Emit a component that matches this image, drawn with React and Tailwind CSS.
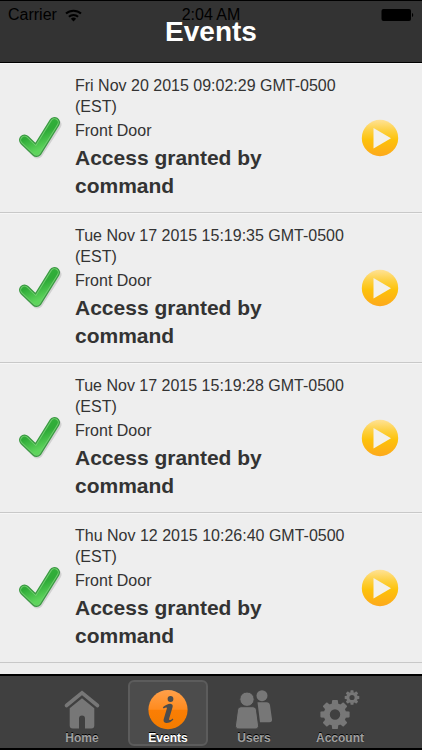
import { useState } from "react";

const events = [
  { id: 1, date: "Fri Nov 20 2015 09:02:29 GMT-0500 (EST)", door: "Front Door", message: "Access granted by command" },
  { id: 2, date: "Tue Nov 17 2015 15:19:35 GMT-0500 (EST)", door: "Front Door", message: "Access granted by command" },
  { id: 3, date: "Tue Nov 17 2015 15:19:28 GMT-0500 (EST)", door: "Front Door", message: "Access granted by command" },
  { id: 4, date: "Thu Nov 12 2015 10:26:40 GMT-0500 (EST)", door: "Front Door", message: "Access granted by command" },
];

const WifiIcon = () => (
  <svg width="17" height="13" viewBox="0 0 17 13" fill="none" stroke="#000" strokeWidth="2" aria-hidden="true">
    <path d="M1 4.6a11 11 0 0 1 15 0" />
    <path d="M3.9 7.8a6.8 6.8 0 0 1 9.2 0" />
    <path d="M8.5 12.4 5.9 9.8a3.8 3.8 0 0 1 5.2 0z" fill="#000" stroke="none" />
  </svg>
);

const BatteryIcon = () => (
  <svg width="33" height="14" viewBox="0 0 33 14" aria-hidden="true">
    <rect x="0.5" y="1" width="29.5" height="12" rx="2" fill="#000" />
    <path d="M31 5c1.6.4 1.6 3.6 0 4z" fill="#000" />
  </svg>
);

const CheckIcon = () => (
  <svg width="44" height="44" viewBox="0 0 44 44" className="shrink-0" role="img" aria-label="Granted">
    <defs>
      <linearGradient id="check" x1="0" y1="0" x2="0.4" y2="1">
        <stop offset="0" stopColor="#35b33c" />
        <stop offset="0.5" stopColor="#2fab38" />
        <stop offset="1" stopColor="#5ed55c" />
      </linearGradient>
    </defs>
    <g fill="none" strokeLinecap="round" strokeLinejoin="round">
      <path d="M7.500 25.500 19.500 37 38 8.500" stroke="#000" strokeOpacity="0.12" strokeWidth="11" />
      <path d="M6.500 24 18.500 35.500 36.500 6.500" stroke="#3a9a42" strokeWidth="11" />
      <path d="M6.500 24 18.500 35.500 36.500 6.500" stroke="#6fce6e" strokeWidth="8.6" />
      <path d="M6.500 24 18.500 35.500 36.500 6.500" stroke="url(#check)" strokeWidth="6.6" />
    </g>
  </svg>
);

const PlayIcon = () => (
  <svg width="38" height="38" viewBox="0 0 38 38" aria-hidden="true">
    <defs>
      <linearGradient id="play" x1="0" y1="0" x2="0" y2="1">
        <stop offset="0" stopColor="#ffe295" />
        <stop offset="0.3" stopColor="#fdd040" />
        <stop offset="0.55" stopColor="#fdc20b" />
        <stop offset="1" stopColor="#fda91c" />
      </linearGradient>
    </defs>
    <circle cx="19" cy="19" r="18.2" fill="url(#play)" />
    <path d="M12.500 9v20.500L30 19.200z" fill="#f3f1ec" />
  </svg>
);

const HomeIcon = () => (
  <svg width="40" height="40" viewBox="0 0 40 40" aria-hidden="true">
    <path d="M4.500 15.500 20 2.800l15.500 12.700" fill="none" stroke="#777" strokeWidth="3.6" strokeLinecap="round" strokeLinejoin="miter" />
    <path d="M7.700 18.300 20 8.200l12.300 10.100V35.500a3 3 0 0 1-3 3H23V28.500a3 3 0 0 0-6 0v10h-6.300a3 3 0 0 1-3-3z" fill="#777" />
  </svg>
);

const InfoIcon = () => (
  <svg width="40" height="40" viewBox="0 0 40 40" aria-hidden="true">
    <defs>
      <linearGradient id="info" x1="0" y1="0" x2="0" y2="1">
        <stop offset="0" stopColor="#ffa04a" />
        <stop offset="0.49" stopColor="#ff8b1f" />
        <stop offset="0.51" stopColor="#fb7e04" />
        <stop offset="1" stopColor="#f27c00" />
      </linearGradient>
    </defs>
    <circle cx="20" cy="19.7" r="19.6" fill="url(#info)" />
    <circle cx="22.5" cy="9" r="2.9" fill="#4c4c4c" />
    <path
      d="M14.800 17.200c3-2.300 5.800-3.600 8-3.300 1.700.2 2.200 1.300 1.800 3l-3.400 11.700c-.3 1.200 0 1.600.6 1.500.9-.1 1.800-.8 2.700-1.700l.9 1c-2.200 2.500-5 3.700-7.300 3.500-2.200-.2-2.900-1.700-2.400-3.600l3.100-10.600c.2-.9 0-1.300-.6-1.300-.7 0-1.500.4-2.500 1.100z"
      fill="#4c4c4c"
    />
  </svg>
);

const UsersIcon = () => (
  <svg width="40" height="40" viewBox="0 0 40 40" aria-hidden="true">
    <g fill="#777">
      <circle cx="28" cy="5.7" r="5.5" />
      <path d="M23.500 12.300h9c2 0 3.200 1.200 3.500 3l2 14c.3 1.900-.7 3-2.500 3H26z" />
    </g>
    <g fill="#777" stroke="#404040" strokeWidth="1">
      <circle cx="13" cy="9.2" r="7.2" />
      <path d="M7.500 16.700h11c2.300 0 3.700 1.200 4 3.500l2 14.800c.3 2.400-1 4-3.300 4H5c-2.400 0-3.800-1.600-3.500-4l2-14.800c.3-2.300 1.700-3.500 4-3.500z" />
    </g>
  </svg>
);

const teeth = [0, 45, 90, 135, 180, 225, 270, 315];

const Gear = ({ transform }) => (
  <g transform={transform}>
    <circle r="8.2" fill="none" stroke="#777" strokeWidth="6" />
    {teeth.map((angle) => (
      <path key={angle} d="M-3.300-10 -2.900-14q.2-.6.8-.6h4.200q.6 0 .8.6L3.300-10z" fill="#777" transform={`rotate(${angle})`} />
    ))}
  </g>
);

const AccountIcon = () => (
  <svg width="40" height="40" viewBox="0 0 40 40" aria-hidden="true">
    <Gear transform="translate(15 24.5)" />
    <Gear transform="translate(32 7.5) scale(.5)" />
  </svg>
);

const tabs = [
  { name: "Home", Icon: HomeIcon },
  { name: "Events", Icon: InfoIcon },
  { name: "Users", Icon: UsersIcon },
  { name: "Account", Icon: AccountIcon },
];

const EventRow = ({ event }) => (
  <li className="flex items-center border-t border-t-[#f6f6f6] border-b border-b-[#c8c8c8] pr-[23px] pl-[18px]">
    <CheckIcon />
    <div className="mr-2 ml-[13px] min-w-0 flex-1 pt-[11px] pb-3 text-[#333]">
      <p className="leading-[21px]">{event.date}</p>
      <p className="my-[3px] leading-[21px]">{event.door}</p>
      <h2 className="text-[21px] leading-7 font-bold">{event.message}</h2>
    </div>
    <button type="button" aria-label="Play event" className="shrink-0">
      <PlayIcon />
    </button>
  </li>
);

export default function App() {
  const [active, setActive] = useState("Events");

  return (
    <div className="flex h-screen flex-col bg-[#eee] font-['Liberation_Sans',Arial,sans-serif] text-base">
      <header className="shrink-0 border-y border-black bg-[#333] pb-3.5">
        <div className="grid grid-cols-3 items-center px-2 pt-1 leading-5 text-black">
          <div className="flex items-center gap-2">
            <span>Carrier</span>
            <WifiIcon />
          </div>
          <span className="text-center">2:04 AM</span>
          <div className="flex justify-end">
            <BatteryIcon />
          </div>
        </div>
        {/* the title rides up under the clock */}
        <h1 className="relative -mt-2.5 text-center text-[28px] leading-[33px] font-bold text-white">Events</h1>
      </header>

      <ul className="min-h-0 flex-1 overflow-hidden">
        {events.map((event) => (
          <EventRow key={event.id} event={event} />
        ))}
      </ul>

      <nav className="flex shrink-0 justify-center gap-1.5 border-y-2 border-t-black border-b-black bg-[#404040] pt-1 pb-0.5">
        {tabs.map(({ name, Icon }) => (
          <button
            key={name}
            type="button"
            onClick={() => setActive(name)}
            className={`flex w-20 flex-col items-center rounded-md border-2 pt-2 text-xs leading-3 font-bold ${
              active === name ? "border-[#5c5c5c] bg-[#4c4c4c] text-white" : "border-transparent text-[#a0a0a0]"
            }`}
          >
            <Icon />
            <span className="mt-0.5 [text-shadow:0_-1px_0_#000]">{name}</span>
          </button>
        ))}
      </nav>
    </div>
  );
}
